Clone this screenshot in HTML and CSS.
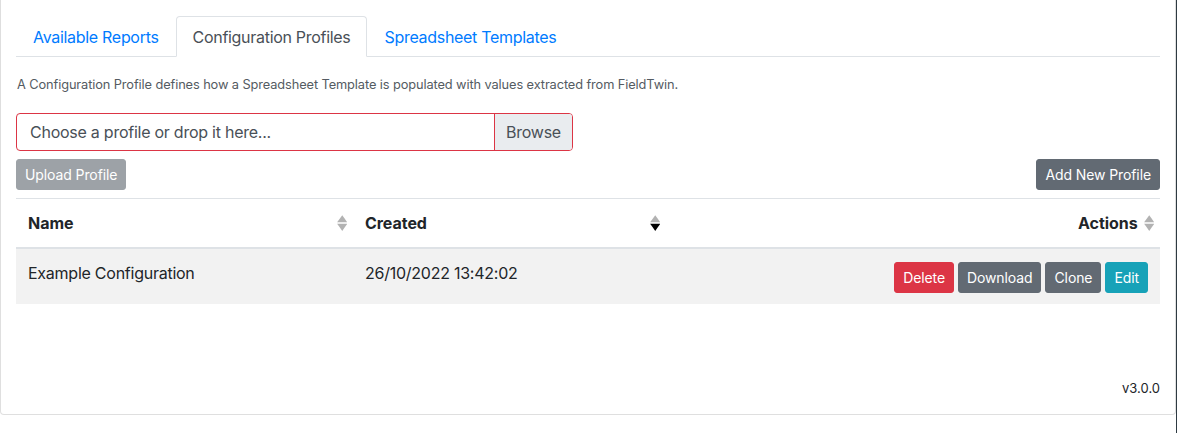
FILE: index.html
```html
<!DOCTYPE html>
<html>
<head>
<meta charset="utf-8">
<link rel="stylesheet" href="styles.css">
</head>
<body>
<div class="frame">
  <div class="card">
    <ul class="tabs">
      <li class="tab">Available Reports</li>
      <li class="tab active">Configuration Profiles</li>
      <li class="tab">Spreadsheet Templates</li>
    </ul>
    <p class="desc">A Configuration Profile defines how a Spreadsheet Template is populated with values extracted from FieldTwin.</p>
    <div class="file">
      <span class="file-label">Choose a profile or drop it here...</span>
      <span class="file-browse">Browse</span>
    </div>
    <div class="toolbar">
      <button class="btn btn-disabled">Upload Profile</button>
      <button class="btn btn-secondary">Add New Profile</button>
    </div>
    <table class="table">
      <thead>
        <tr>
          <th class="col-name"><span class="th-in"><span>Name</span><svg class="sort" viewBox="0 0 101 101" preserveAspectRatio="none"><path opacity=".3" d="M51 1l25 23 24 22H1l25-22zM51 101l25-23 24-22H1l25 22z"/></svg></span></th>
          <th class="col-created"><span class="th-in"><span>Created</span><svg class="sort" viewBox="0 0 101 101" preserveAspectRatio="none"><path opacity=".3" d="M51 1l25 23 24 22H1l25-22z"/><path d="M51 101l25-23 24-22H1l25 22z"/></svg></span></th>
          <th class="col-actions"><span class="th-in right"><span>Actions</span><svg class="sort" viewBox="0 0 101 101" preserveAspectRatio="none"><path opacity=".3" d="M51 1l25 23 24 22H1l25-22zM51 101l25-23 24-22H1l25 22z"/></svg></span></th>
        </tr>
      </thead>
      <tbody>
        <tr>
          <td>Example Configuration</td>
          <td>26/10/2022 13:42:02</td>
          <td class="actions">
            <div class="btns">
              <button class="btn btn-danger">Delete</button>
              <button class="btn btn-secondary">Download</button>
              <button class="btn btn-secondary">Clone</button>
              <button class="btn btn-info">Edit</button>
            </div>
          </td>
        </tr>
      </tbody>
    </table>
    <div class="version">v3.0.0</div>
  </div>
  <div class="edge"></div>
</div>
</body>
</html>
```
FILE: styles.css
```css
* { box-sizing: border-box; }
html, body { margin: 0; padding: 0; background: #fff; }
body {
  font-family: Inter, "Liberation Sans", Arial, sans-serif;
  color: #212529;
  font-size: 16px;
  line-height: 1.5;
  height: 433px;
  overflow: hidden;
  letter-spacing: -0.25px;
}
.frame { display: flex; align-items: flex-start; height: 433px; }
.card {
  flex: 1;
  border: 1px solid rgba(0,0,0,.125);
  border-top: none;
  border-radius: 0 0 4px 4px;
  padding: 16px 15px 15px 15px;
  height: 415px;
}
.edge { width: 1px; height: 433px; background: #2e3a42; }
.tabs {
  list-style: none;
  margin: 0;
  padding: 0;
  display: flex;
  border-bottom: 1px solid #dee2e6;
  height: 41px;
}
.tab {
  padding: 8px 16px;
  border: 1px solid transparent;
  border-radius: 4px 4px 0 0;
  color: #007bff;
  height: 41px;
  margin-bottom: -1px;
  letter-spacing: -0.3px;
}
.tab.active {
  color: #495057;
  border-color: #dee2e6 #dee2e6 #fff;
  background: #fff;
}
.desc {
  margin: 18px 0 0 1px;
  font-size: 12.8px;
  line-height: 19px;
  color: #545b62;
  letter-spacing: -0.1px;
}
.file {
  margin-top: 19px;
  width: 557px;
  height: 38px;
  border: 1px solid #dc3545;
  border-radius: 4px;
  display: flex;
  align-items: stretch;
  color: #495057;
  overflow: hidden;
}
.file-label { flex: 1; padding: 6px 13px; line-height: 24px; }
.file-browse {
  width: 78px;
  background: #e9ecef;
  border-left: 1px solid #dc3545;
  padding: 6px 0;
  line-height: 24px;
  text-align: center;
}
.toolbar {
  margin-top: 8px;
  display: flex;
  justify-content: space-between;
}
.btn {
  font-family: inherit;
  font-size: 14px;
  line-height: 21px;
  padding: 4px 8px;
  border: 1px solid transparent;
  border-radius: 3px;
  color: #fff;
  height: 31px;
  cursor: pointer;
  letter-spacing: -0.1px;
}
.btn-disabled { background: #9da2a7; border-color: #9da2a7; }
.btn-secondary { background: #626a73; border-color: #626a73; }
.btn-danger { background: #dc3545; border-color: #dc3545; }
.btn-info { background: #17a2b8; border-color: #17a2b8; }
.table {
  margin-top: 8px;
  width: 100%;
  border-collapse: collapse;
}
.table th, .table td {
  padding: 12px;
  text-align: left;
}
.table th {
  border-top: 1px solid #dee2e6;
  border-bottom: 2px solid #dee2e6;
  font-weight: 700;
  line-height: 24px;
  padding-right: 6px;
  vertical-align: middle;
  letter-spacing: -0.05px;
}
.col-name { width: 337px; }
.col-created { width: 313px; }
.th-in { display: flex; align-items: center; justify-content: space-between; }
.th-in.right { justify-content: flex-end; }
.th-in.right .sort { margin-left: 6px; }
.sort { width: 10.4px; height: 16px; display: block; }
.table tbody tr { background: #f2f2f2; }
.table td { line-height: 24px; height: 55px; vertical-align: top; }
.table td.actions { text-align: right; padding-top: 13px; padding-bottom: 11px; }
.btns { display: flex; justify-content: flex-end; gap: 4px; }
.version {
  margin-top: 74px;
  text-align: right;
  font-size: 13px;
  line-height: 20px;
  letter-spacing: 0;
}
```
